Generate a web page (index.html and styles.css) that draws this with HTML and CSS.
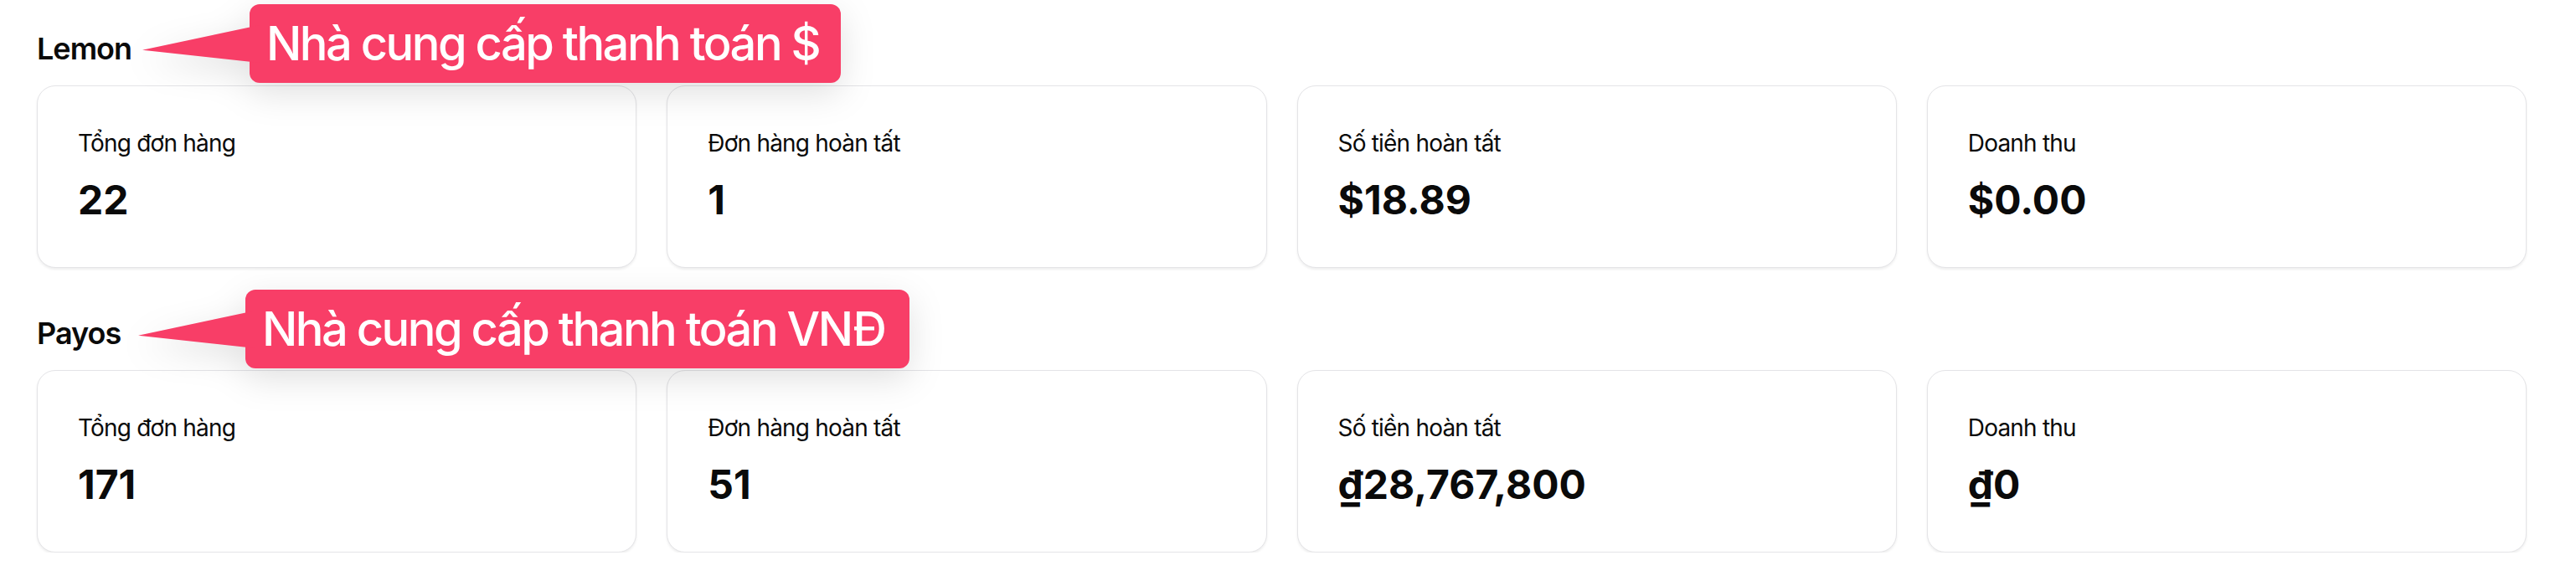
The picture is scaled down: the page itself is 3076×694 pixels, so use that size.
FILE: index.html
```html
<!DOCTYPE html>
<html lang="vi">
<head>
<meta charset="utf-8">
<title>Nhà cung cấp thanh toán</title>
<link rel="stylesheet" href="styles.css">
</head>
<body>
<div class="page">
  <section class="section">
    <h2 class="section-title">Lemon</h2>
    <div class="callout callout-usd">Nhà cung cấp thanh toán $</div>
    <div class="grid">
      <div class="card"><div class="label">Tổng đơn hàng</div><div class="value">22</div></div>
      <div class="card"><div class="label">Đơn hàng hoàn tất</div><div class="value">1</div></div>
      <div class="card"><div class="label">Số tiền hoàn tất</div><div class="value">$18.89</div></div>
      <div class="card"><div class="label">Doanh thu</div><div class="value">$0.00</div></div>
    </div>
  </section>
  <section class="section">
    <h2 class="section-title">Payos</h2>
    <div class="callout callout-vnd">Nhà cung cấp thanh toán VNĐ</div>
    <div class="grid">
      <div class="card"><div class="label">Tổng đơn hàng</div><div class="value">171</div></div>
      <div class="card"><div class="label">Đơn hàng hoàn tất</div><div class="value">51</div></div>
      <div class="card"><div class="label">Số tiền hoàn tất</div><div class="value">₫28,767,800</div></div>
      <div class="card"><div class="label">Doanh thu</div><div class="value">₫0</div></div>
    </div>
  </section>
</div>
</body>
</html>
```
FILE: styles.css
```css
* { box-sizing: border-box; }
html, body { margin: 0; background: #ffffff; }
body {
  font-family: "Inter", "Noto Sans", "Liberation Sans", sans-serif;
  color: #0a0a0a;
}
.page {
  padding: 30px 59px 0 44px;
}
.section {
  position: relative;
}
.section + .section {
  margin-top: 50px;
}
.section-title {
  margin: 0 0 16px 0;
  font-size: 36px;
  line-height: 56px;
  font-weight: 600;
  letter-spacing: -1px;
  color: #0a0a0a;
}
.grid {
  display: grid;
  grid-template-columns: repeat(4, 1fr);
  gap: 36px;
}
.card {
  border: 1px solid #e4e4e7;
  border-radius: 22px;
  padding: 48px;
  background: #ffffff;
  box-shadow: 0 2px 3px rgba(0, 0, 0, 0.07);
}
.label {
  font-size: 28px;
  line-height: 40px;
  font-weight: 400;
  letter-spacing: -0.8px;
  color: #0a0a0a;
}
.value {
  margin-top: 16px;
  font-size: 48px;
  line-height: 64px;
  font-weight: 700;
  color: #0a0a0a;
}
.callout {
  position: absolute;
  height: 94px;
  display: flex;
  align-items: center;
  padding: 0 26px 0 20px;
  background: #f83e67;
  color: #ffffff;
  border-radius: 12px;
  font-size: 56px;
  font-weight: 500;
  letter-spacing: -2.5px;
  white-space: nowrap;
  filter: drop-shadow(0 12px 20px rgba(0, 0, 0, 0.12));
  z-index: 2;
}
.callout::before {
  content: "";
  position: absolute;
  left: -128px;
  top: 25px;
  width: 140px;
  height: 45px;
  background: #f83e67;
  clip-path: polygon(0 66%, 100% 0, 100% 100%);
}
.callout-usd {
  left: 254px;
  top: -25px;
}
.callout-vnd {
  left: 249px;
  top: -24px;
  padding-right: 30px;
}
```
